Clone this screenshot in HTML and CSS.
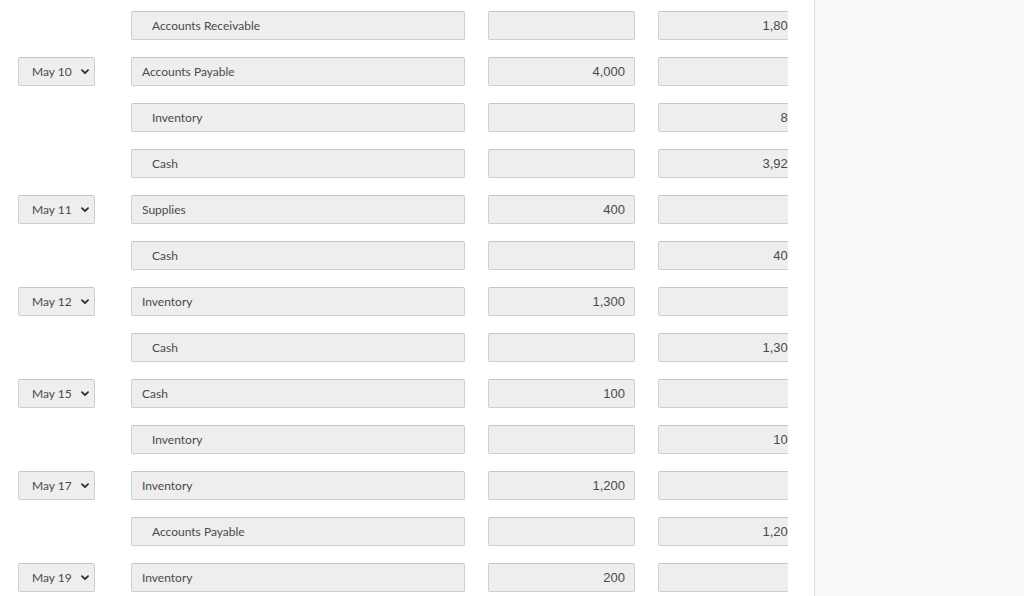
FILE: index.html
```html
<!DOCTYPE html>
<html>
<head>
<meta charset="utf-8">
<link rel="stylesheet" href="styles.css">
</head>
<body>
<div class="page">
  <div class="journal">
    <div class="row">
      <div class="date empty"></div>
      <div class="field account indent">Accounts Receivable</div>
      <div class="field amount"></div>
      <div class="field amount">1,800</div>
    </div>
    <div class="row">
      <div class="field date">May 10<svg class="chev" viewBox="0 0 8 6" width="8" height="6"><path d="M1 1.2 L4 4.2 L7 1.2" /></svg></div>
      <div class="field account">Accounts Payable</div>
      <div class="field amount">4,000</div>
      <div class="field amount"></div>
    </div>
    <div class="row">
      <div class="date empty"></div>
      <div class="field account indent">Inventory</div>
      <div class="field amount"></div>
      <div class="field amount">80</div>
    </div>
    <div class="row">
      <div class="date empty"></div>
      <div class="field account indent">Cash</div>
      <div class="field amount"></div>
      <div class="field amount">3,920</div>
    </div>
    <div class="row">
      <div class="field date">May 11<svg class="chev" viewBox="0 0 8 6" width="8" height="6"><path d="M1 1.2 L4 4.2 L7 1.2" /></svg></div>
      <div class="field account">Supplies</div>
      <div class="field amount">400</div>
      <div class="field amount"></div>
    </div>
    <div class="row">
      <div class="date empty"></div>
      <div class="field account indent">Cash</div>
      <div class="field amount"></div>
      <div class="field amount">400</div>
    </div>
    <div class="row">
      <div class="field date">May 12<svg class="chev" viewBox="0 0 8 6" width="8" height="6"><path d="M1 1.2 L4 4.2 L7 1.2" /></svg></div>
      <div class="field account">Inventory</div>
      <div class="field amount">1,300</div>
      <div class="field amount"></div>
    </div>
    <div class="row">
      <div class="date empty"></div>
      <div class="field account indent">Cash</div>
      <div class="field amount"></div>
      <div class="field amount">1,300</div>
    </div>
    <div class="row">
      <div class="field date">May 15<svg class="chev" viewBox="0 0 8 6" width="8" height="6"><path d="M1 1.2 L4 4.2 L7 1.2" /></svg></div>
      <div class="field account">Cash</div>
      <div class="field amount">100</div>
      <div class="field amount"></div>
    </div>
    <div class="row">
      <div class="date empty"></div>
      <div class="field account indent">Inventory</div>
      <div class="field amount"></div>
      <div class="field amount">100</div>
    </div>
    <div class="row">
      <div class="field date">May 17<svg class="chev" viewBox="0 0 8 6" width="8" height="6"><path d="M1 1.2 L4 4.2 L7 1.2" /></svg></div>
      <div class="field account">Inventory</div>
      <div class="field amount">1,200</div>
      <div class="field amount"></div>
    </div>
    <div class="row">
      <div class="date empty"></div>
      <div class="field account indent">Accounts Payable</div>
      <div class="field amount"></div>
      <div class="field amount">1,200</div>
    </div>
    <div class="row">
      <div class="field date">May 19<svg class="chev" viewBox="0 0 8 6" width="8" height="6"><path d="M1 1.2 L4 4.2 L7 1.2" /></svg></div>
      <div class="field account">Inventory</div>
      <div class="field amount">200</div>
      <div class="field amount"></div>
    </div>
  </div>
  <div class="spacer"></div>
  <div class="panel"></div>
</div>
</body>
</html>
```

FILE: styles.css
```css
*, *::before, *::after {
  box-sizing: border-box;
}

html, body {
  margin: 0;
  padding: 0;
  background: #ffffff;
}

body {
  font-family: Lato, "Liberation Sans", sans-serif;
  font-size: 12px;
  color: #4a4a4a;
}

.page {
  display: flex;
  height: 596px;
  overflow: hidden;
}

.journal {
  width: 788px;
  flex: none;
  overflow: hidden;
  display: flex;
  flex-direction: column;
  gap: 17px;
  padding-top: 11px;
}

.row {
  display: flex;
  align-items: center;
  height: 29px;
  flex: none;
}

.field {
  height: 29px;
  background: #eeeeee;
  border: 1px solid #cfcfcf;
  border-top-color: #c6c6c6;
  border-radius: 2px;
  display: flex;
  align-items: center;
  white-space: nowrap;
  flex: none;
}

.date {
  width: 77px;
  height: 29px;
  margin-left: 18px;
  margin-right: 36px;
  padding: 0 5px 0 13px;
  justify-content: space-between;
  flex: none;
}

.chev {
  fill: none;
  stroke: #333333;
  stroke-width: 1.9;
  stroke-linecap: round;
  stroke-linejoin: round;
}

.account {
  width: 334px;
  padding-left: 10px;
  margin-right: 23px;
}

.account.indent {
  padding-left: 20px;
}

.amount {
  width: 147px;
  padding-right: 9px;
  justify-content: flex-end;
  margin-right: 23px;
  font-family: "Liberation Sans", Arial, sans-serif;
  font-size: 13px;
}

.spacer {
  width: 26px;
  flex: none;
}

.panel {
  flex: 1;
  background: #fafafa;
  border-left: 1px solid #dddddd;
}
```
